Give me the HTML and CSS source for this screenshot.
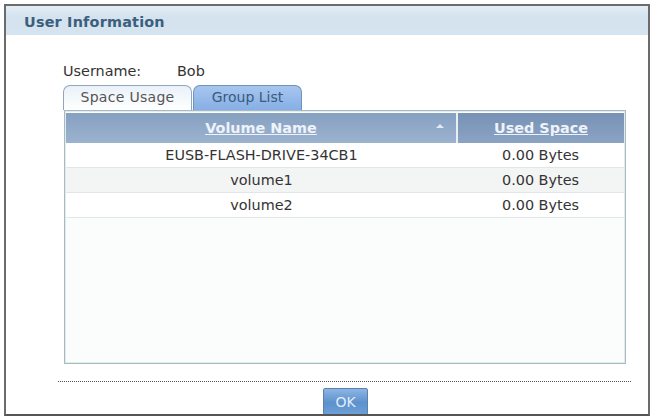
FILE: index.html
```html
<!DOCTYPE html>
<html>

<head>
    <meta charset="UTF-8">
    <title>User Information</title>
    <link rel="stylesheet" href="styles.css">
</head>

<body>
    <div class="dialog">
        <div class="dialog-title">User Information</div>

        <div class="dialog-body">
            <div class="user-row">
                <span class="user-label">Username:</span>
                <span class="user-name">Bob</span>
            </div>

            <div class="tabs">
                <div class="tab tab-active">Space Usage</div>
                <div class="tab">Group List</div>
            </div>

            <div class="panel">
                <table class="grid">
                    <thead>
                        <tr>
                            <th class="col-name"><a href="#">Volume Name</a><span class="sort-up"></span></th>
                            <th class="col-used"><a href="#">Used Space</a></th>
                        </tr>
                    </thead>
                    <tbody>
                        <tr>
                            <td>EUSB-FLASH-DRIVE-34CB1</td>
                            <td>0.00 Bytes</td>
                        </tr>
                        <tr class="alt">
                            <td>volume1</td>
                            <td>0.00 Bytes</td>
                        </tr>
                        <tr>
                            <td>volume2</td>
                            <td>0.00 Bytes</td>
                        </tr>
                    </tbody>
                </table>
            </div>
        </div>

        <div class="dialog-foot">
            <button type="button" class="btn-ok">OK</button>
        </div>
    </div>
</body>

</html>
```

FILE: styles.css
```css
body {
    margin: 0;
    background-color: #ffffff;
    font-family: "DejaVu Sans", Verdana, sans-serif;
    font-size: 14.4px;
    color: #333333;
}

.dialog {
    width: 642px;
    height: 408px;
    margin: 4px 0 0 4px;
    border: 2px solid #6b6b6b;
    border-bottom-color: #555555;
    display: flex;
    flex-direction: column;
    overflow: hidden;
}

.dialog-title {
    height: 29px;
    box-sizing: border-box;
    padding: 4px 0 0 18px;
    line-height: 25px;
    background: linear-gradient(#e3edf5, #d3e2ee 40%, #d6e4ef);
    color: #3b5f7c;
    font-weight: bold;
    letter-spacing: 0.2px;
}

.dialog-body {
    padding: 0 22px 0 57px;
}

.user-row {
    margin-top: 27px;
    line-height: 18px;
    display: flex;
}

.user-label {
    width: 114px;
}

.tabs {
    margin-top: 5px;
    display: flex;
    height: 25px;
}

.tab {
    box-sizing: border-box;
    height: 25px;
    line-height: 23px;
    text-align: center;
    border: 1px solid #8fa6bd;
    border-bottom: none;
    border-radius: 7px 7px 0 0;
    font-size: 14px;
    margin-right: 1px;
}

.tab-active {
    width: 129px;
    background: linear-gradient(#e9f1f8, #ffffff);
    color: #555555;
    letter-spacing: 0.3px;
}

.tab:not(.tab-active) {
    width: 109px;
    background: linear-gradient(#a7c6ee, #86afe6);
    border-color: #6f93c0;
    color: #3a5a7e;
}

.panel {
    margin-left: 1px;
    height: 254px;
    box-sizing: border-box;
    border: 1px solid #a9b9c2;
    box-shadow: inset 0 0 0 1px #e2eaee;
    background-color: #fbfdfd;
    padding: 2px 1px;
}

.grid {
    width: 100%;
    border-collapse: collapse;
}

.grid th {
    height: 30px;
    padding: 0;
    font-weight: bold;
    position: relative;
}

.grid th a {
    color: #eef3f9;
    text-decoration: underline;
}

.col-name {
    width: 390px;
    background: linear-gradient(#86a0c0, #9cb3cf);
}

.col-used {
    border-left: 2px solid #e9eef3;
    background: linear-gradient(#7792b6, #8ba3c3);
}

/* sort indicator on the active column */
.sort-up {
    position: absolute;
    right: 12px;
    top: 11px;
    width: 0;
    height: 0;
    border-left: 4px solid transparent;
    border-right: 4px solid transparent;
    border-bottom: 4px solid #e2eaf3;
}

.grid td {
    height: 24px;
    padding: 0;
    text-align: center;
    border-bottom: 1px solid #e3e6e8;
    background-color: #ffffff;
}

.grid tr.alt td {
    background-color: #f3f4f4;
}

.dialog-foot {
    margin: 17px 17px 0 52px;
    padding-top: 6px;
    border-top: 1px dotted #555555;
    display: flex;
    justify-content: center;
}

.btn-ok {
    width: 45px;
    height: 27px;
    margin-left: 2px;
    border: 1px solid #5a80ab;
    border-radius: 2px;
    background: linear-gradient(#8cb5e3, #5d91cd 55%, #6c9fd7);
    color: #e3edf9;
    font-family: "DejaVu Sans", Verdana, sans-serif;
    font-size: 14px;
    cursor: pointer;
}
```
